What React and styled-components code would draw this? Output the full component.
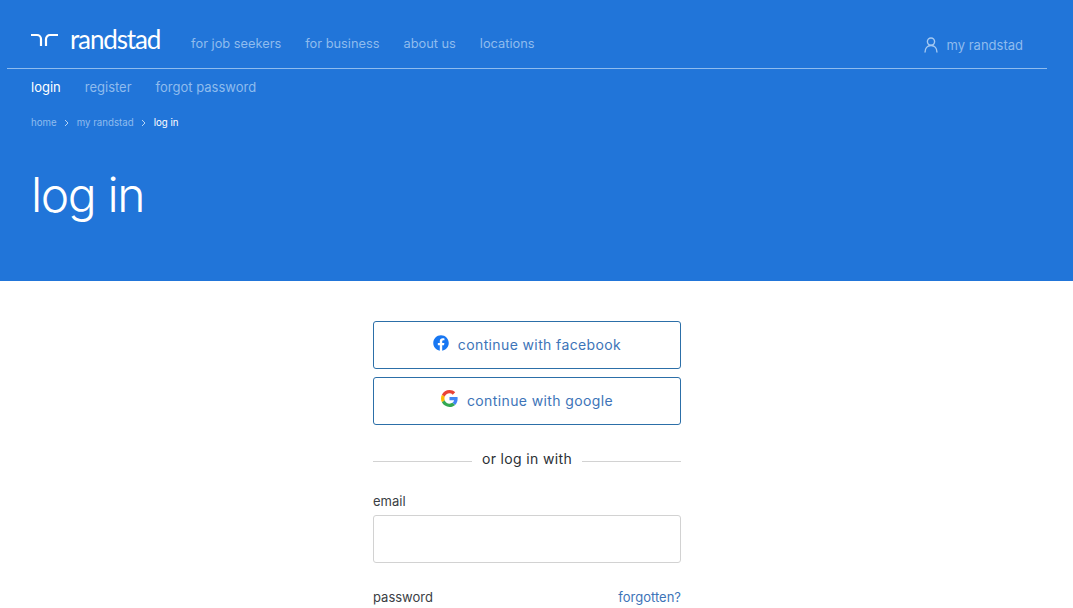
import React from 'react';
import styled, {createGlobalStyle} from 'styled-components';
import {FaFacebook} from 'react-icons/fa';

const GlobalStyle = createGlobalStyle`
  html, body {
    margin: 0;
    height: 608px;
    overflow: hidden;
    background: #fff;
    font-family: Inter, "Liberation Sans", sans-serif;
  }
`;

const Hero = styled.header`
  height: 281px;
  background: #2175d9;
  box-sizing: border-box;
  padding: 0 26px 0 7px;
`;

const TopBar = styled.div`
  height: 68px;
  border-bottom: 1px solid #8fbcee;
  display: flex;
  align-items: flex-start;
  padding: 0 24px;
`;

const Logo = styled.div`
  display: flex;
  align-items: center;
  gap: 12px;
  margin-top: 25px;
  height: 27px;
  color: #fff;
  font-family: Lato, sans-serif;
  font-size: 26px;
  letter-spacing: -1.15px;
`;

const MainNav = styled.nav`
  display: flex;
  gap: 24px;
  margin: 35px 0 0 31px;
`;

const NavLink = styled.a`
  font-size: ${({$small}) => ($small ? '12.8px' : '13px')};
  line-height: 17px;
  color: ${({$active}) => ($active ? '#fff' : '#8fbcee')};
`;

const Account = styled.div`
  margin: 36px 0 0 auto;
  display: flex;
  align-items: center;
  gap: 9px;
  font-size: 13px;
  line-height: 18px;
  color: #8fbcee;
`;

const SubNav = styled.nav`
  display: flex;
  gap: 24px;
  padding: 10px 0 0 24px;
`;

const Crumbs = styled.div`
  display: flex;
  align-items: center;
  gap: 7.5px;
  padding: 20px 0 0 24px;
  font-size: 9.7px;
  line-height: 14px;
  color: #8fbcee;
`;

const CrumbCurrent = styled.span`
  color: #fff;
`;

const Title = styled.h1`
  margin: 0;
  padding: 35px 0 0 24px;
  font-size: 48px;
  line-height: 60px;
  font-weight: 300;
  color: #fff;
  letter-spacing: -1.4px;
`;

const FormArea = styled.main`
  display: flex;
  justify-content: center;
  padding-right: 19px;
`;

const Form = styled.div`
  width: 308px;
  margin-top: 40px;
  display: flex;
  flex-direction: column;
`;

const SocialButton = styled.button`
  height: 48px;
  margin-bottom: 8px;
  background: #fff;
  border: 1px solid #2c6fa8;
  border-radius: 3px;
  display: flex;
  align-items: center;
  justify-content: center;
  gap: 9px;
  padding: 0 0 1px;
  font-family: inherit;
  font-size: 14px;
  letter-spacing: 0.38px;
  color: #3d74b8;
`;

const IconSlot = styled.span`
  display: flex;
  margin-top: -4px;
`;

const Divider = styled.div`
  display: flex;
  align-items: center;
  gap: 10px;
  margin-top: 16px;
  font-size: 14px;
  line-height: 20px;
  letter-spacing: 0.35px;
  color: #2b2f35;
  &::before, &::after {
    content: "";
    flex: 1;
    height: 1px;
    margin-top: 5px;
    background: #d2d2d2;
  }
`;

const LabelRow = styled.div`
  display: flex;
  justify-content: space-between;
  margin: ${({$first}) => ($first ? '22px 0 4px' : '24px 0 5px')};
  font-size: 13px;
  line-height: 20px;
  color: #3a3e44;
`;

const Forgot = styled.a`
  color: #3d74b8;
`;

const Field = styled.input`
  height: 48px;
  box-sizing: border-box;
  border: 1px solid #d2d2d2;
  border-radius: 3px;
  background: #fff;
`;

const Chevron = () => (
    <svg width="5" height="8" viewBox="0 0 5 8" fill="none" stroke="#b6d3f4" strokeWidth="1">
        <path d="M1 1l3 3-3 3"/>
    </svg>
);

const LogoMark = () => (
    <svg width="27" height="15" viewBox="0 -2 27 15" fill="none" stroke="#fff" strokeWidth="2.2">
        <path d="M0 2h6a4 4 0 0 1 4 4v7"/>
        <path d="M15 13V6a4 4 0 0 1 4-4h8"/>
    </svg>
);

const UserIcon = () => (
    <svg width="14" height="16" viewBox="0 0 14 16" fill="none" stroke="#a5c9f2" strokeWidth="1.4">
        <circle cx="7" cy="4.6" r="3.6"/>
        <path d="M1 15.5c0-4 2.4-7 6-7s6 3 6 7"/>
    </svg>
);

const GoogleIcon = () => (
    <svg width="17" height="17" viewBox="0 0 48 48">
        <path fill="#EA4335" d="M24 9.5c3.5 0 6.700 1.200 9.200 3.600l6.900-6.900C35.900 2.400 30.500 0 24 0 14.600 0 6.500 5.400 2.600 13.200l8 6.200C12.500 13.700 17.800 9.500 24 9.500z"/>
        <path fill="#4285F4" d="M46.900 24.500c0-1.600-.1-3.100-.4-4.500H24v9h12.900c-.6 3-2.200 5.500-4.700 7.200l7.700 6c4.500-4.200 7-10.300 7-17.700z"/>
        <path fill="#FBBC05" d="M10.500 28.600c-.5-1.400-.8-3-.8-4.600s.3-3.200.8-4.600l-8-6.200C.9 16.500 0 20.100 0 24s.9 7.500 2.600 10.800l7.900-6.200z"/>
        <path fill="#34A853" d="M24 48c6.500 0 11.900-2.100 15.900-5.800l-7.700-6c-2.200 1.500-4.900 2.300-8.200 2.300-6.200 0-11.500-4.200-13.400-9.900l-8 6.200C6.500 42.600 14.600 48 24 48z"/>
    </svg>
);

const App = () => (
    <>
        <GlobalStyle/>
        <Hero>
            <TopBar>
                <Logo>
                    <LogoMark/>
                    <span>randstad</span>
                </Logo>
                <MainNav>
                    <NavLink $small>for job seekers</NavLink>
                    <NavLink $small>for business</NavLink>
                    <NavLink $small>about us</NavLink>
                    <NavLink $small>locations</NavLink>
                </MainNav>
                <Account>
                    <UserIcon/>
                    <span>my randstad</span>
                </Account>
            </TopBar>
            <SubNav>
                <NavLink $active>login</NavLink>
                <NavLink>register</NavLink>
                <NavLink>forgot password</NavLink>
            </SubNav>
            <Crumbs>
                <span>home</span>
                <Chevron/>
                <span>my randstad</span>
                <Chevron/>
                <CrumbCurrent>log in</CrumbCurrent>
            </Crumbs>
            <Title>log in</Title>
        </Hero>
        <FormArea>
            <Form>
                <SocialButton>
                    <IconSlot><FaFacebook size={16} color="#1877f2"/></IconSlot>
                    continue with facebook
                </SocialButton>
                <SocialButton>
                    <IconSlot><GoogleIcon/></IconSlot>
                    continue with google
                </SocialButton>
                <Divider>or log in with</Divider>
                <LabelRow $first>email</LabelRow>
                <Field/>
                <LabelRow>
                    <span>password</span>
                    <Forgot>forgotten?</Forgot>
                </LabelRow>
                <Field type="password"/>
            </Form>
        </FormArea>
    </>
);

export default App;
